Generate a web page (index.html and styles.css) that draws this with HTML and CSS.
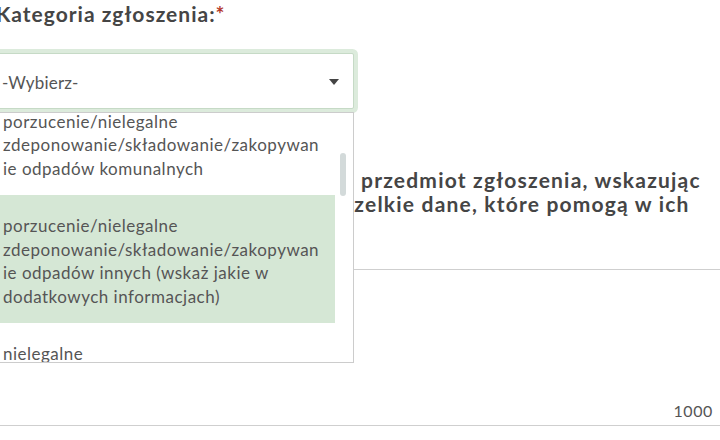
FILE: index.html
```html
<!DOCTYPE html>
<html lang="pl">
<head>
<meta charset="utf-8">
<title>Kategoria zgłoszenia</title>
<link rel="stylesheet" href="styles.css">
</head>
<body>
<div class="form">
  <div class="field-label">Kategoria zgłoszenia:<span class="req">*</span></div>
  <div class="select-wrap">
    <div class="select">
      <span class="select-value">-Wybierz-</span>
      <span class="caret"></span>
    </div>
    <div class="dropdown">
      <div class="options">
        <div class="option">porzucenie/nielegalne<br>zdeponowanie/składowanie/zakopywan<br>ie odpadów komunalnych</div>
        <div class="option active">porzucenie/nielegalne<br>zdeponowanie/składowanie/zakopywan<br>ie odpadów innych (wskaż jakie w<br>dodatkowych informacjach)</div>
        <div class="option">nielegalne<br>spalanie odpadów</div>
      </div>
      <div class="thumb"></div>
    </div>
  </div>
  <div class="desc">
    <div class="desc-line"><span class="lead lead1">Opisz dokładnie miejsce oraz</span><span>przedmiot zgłoszenia, wskazując</span></div>
    <div class="desc-line"><span class="lead lead2">rodzaj i ilość odpadów oraz</span><span>wszelkie dane, które pomogą w ich</span></div>
    <div class="desc-line"><span>identyfikacji.</span></div>
  </div>
  <div class="textarea">
    <span class="counter">1000</span>
  </div>
</div>
</body>
</html>
```
FILE: styles.css
```css
html, body {
  margin: 0;
  padding: 0;
  background: #ffffff;
  overflow: hidden;
}
body {
  width: 720px;
  height: 440px;
  font-family: "Lato", "Noto Sans", sans-serif;
  color: #4a4a4a;
}
.form {
  margin-left: -12px;
  width: 740px;
  padding-top: 2px;
}
.field-label {
  padding-left: 8px;
  font-size: 21px;
  line-height: 24px;
  font-weight: 700;
  color: #454545;
  letter-spacing: 1px;
}
.req {
  color: #b3392b;
}
.select-wrap {
  position: relative;
  margin-top: 27px;
  width: 366px;
}
.select {
  box-sizing: border-box;
  height: 56px;
  border: 1px solid #c6dac6;
  border-radius: 2px;
  box-shadow: 0 0 0 4px #dcebdc;
  background: #fff;
  display: flex;
  align-items: center;
  justify-content: space-between;
  padding: 2px 14px 0 13px;
}
.select-value {
  font-size: 17px;
  color: #555;
  letter-spacing: 0.2px;
}
.caret {
  width: 0;
  height: 0;
  border-left: 5.5px solid transparent;
  border-right: 5.5px solid transparent;
  border-top: 6px solid #444;
  margin-top: -1px;
}
.dropdown {
  position: absolute;
  left: 0;
  top: 59px;
  box-sizing: border-box;
  width: 366px;
  height: 251px;
  border: 1px solid #cccccc;
  background: #fff;
  overflow: hidden;
  z-index: 5;
}
.options {
  margin-top: -22.5px;
  margin-right: 18px;
}
.option {
  padding: 19px 8px 15px 14px;
  font-size: 17px;
  line-height: 23.5px;
  color: #555;
  white-space: nowrap;
  letter-spacing: 0.5px;
}
.option.active {
  background: #d5e7d5;
}
.thumb {
  position: absolute;
  right: 7px;
  top: 40px;
  width: 6px;
  height: 43px;
  border-radius: 3px;
  background: #d3dada;
}
.desc {
  margin-top: 59px;
  font-size: 21px;
  line-height: 24px;
  font-weight: 700;
  color: #454545;
  letter-spacing: 1.2px;
}
.desc-line {
  display: flex;
  white-space: nowrap;
  padding-left: 8px;
}
.lead {
  flex: none;
  overflow: hidden;
}
.lead1 {
  width: 365px;
}
.lead2 {
  width: 330px;
}
.textarea {
  box-sizing: border-box;
  margin-top: 29px;
  height: 157px;
  border-top: 1px solid #cfcfcf;
  border-bottom: 1px solid #cfcfcf;
  display: flex;
  justify-content: flex-end;
  align-items: flex-end;
  padding: 0 15px 4px 0;
}
.counter {
  font-size: 16px;
  line-height: 20px;
  color: #555;
  letter-spacing: 0.6px;
}
```
